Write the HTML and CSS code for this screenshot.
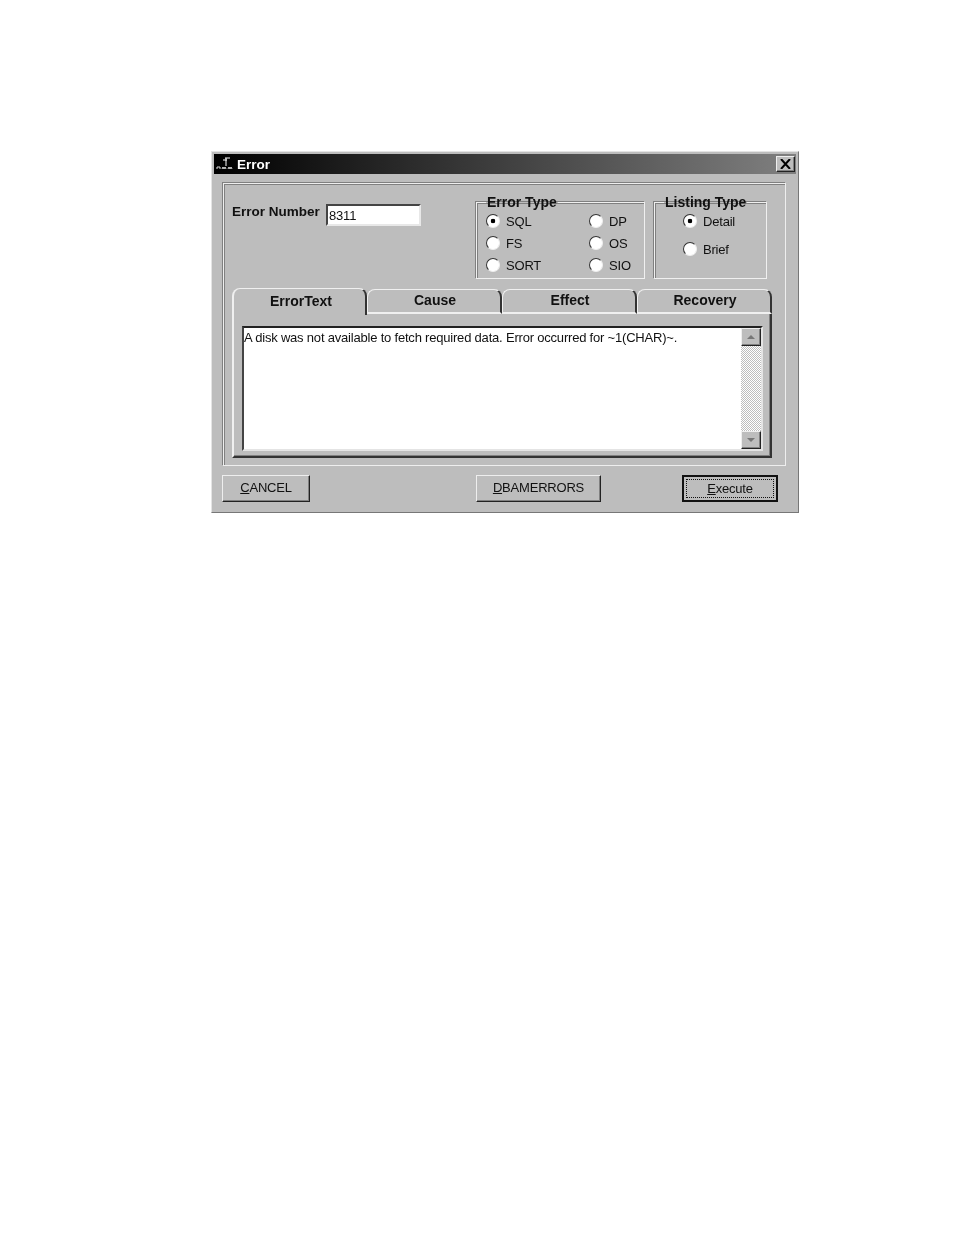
FILE: index.html
```html
<!DOCTYPE html>
<html lang="en">
<head>
  <meta charset="UTF-8">
  <meta name="viewport" content="width=device-width, initial-scale=1.0">
  <title>Error</title>
  <link rel="stylesheet" href="styles.css">
</head>
<body>
  <div class="window">
    <div class="titlebar">
      <svg class="app-icon" width="19" height="14" viewBox="0 0 19 14">
        <path d="M9 1h5M10 1v8M7 3h4" stroke="#fff" stroke-width="1" fill="none"/>
        <path d="M1 12v-2h3v2M6 12l1-2 1 2 1-2 1 2M12 12l1-2 1 2 1-2 1 2" stroke="#ddd" stroke-width="1" fill="none"/>
      </svg>
      <span class="title">Error</span>
      <button class="close" type="button">
        <svg width="11" height="10" viewBox="0 0 11 10"><path d="M1 0l9 10M10 0L1 10" stroke="#000" stroke-width="2"/></svg>
      </button>
    </div>

    <div class="panel">
      <div class="top-row">
        <div class="number-field">
          <label class="number-label" for="errorNumber">Error Number</label>
          <input id="errorNumber" class="number-input" type="text" value="8311">
        </div>

        <fieldset class="group group-error">
          <legend>Error Type</legend>
          <label class="radio"><input type="radio" name="etype" checked>SQL</label>
          <label class="radio"><input type="radio" name="etype">DP</label>
          <label class="radio"><input type="radio" name="etype">FS</label>
          <label class="radio"><input type="radio" name="etype">OS</label>
          <label class="radio"><input type="radio" name="etype">SORT</label>
          <label class="radio"><input type="radio" name="etype">SIO</label>
        </fieldset>

        <fieldset class="group group-listing">
          <legend>Listing Type</legend>
          <label class="radio"><input type="radio" name="ltype" checked>Detail</label>
          <label class="radio"><input type="radio" name="ltype">Brief</label>
        </fieldset>
      </div>

      <div class="tabs">
        <div class="tab active">ErrorText</div>
        <div class="tab">Cause</div>
        <div class="tab">Effect</div>
        <div class="tab">Recovery</div>
      </div>

      <div class="tab-body">
        <div class="text-box">
          <div class="message">A disk was not available to fetch required data. Error occurred for ~1(CHAR)~.</div>
          <div class="scrollbar">
            <div class="scroll-btn"><span class="arrow-up"></span></div>
            <div class="scroll-track"></div>
            <div class="scroll-btn"><span class="arrow-down"></span></div>
          </div>
        </div>
      </div>
    </div>

    <div class="actions">
      <button class="btn btn-cancel" type="button"><u>C</u>ANCEL</button>
      <button class="btn btn-db" type="button"><u>D</u>BAMERRORS</button>
      <button class="btn btn-exec" type="button"><span class="focus-ring"><u>E</u>xecute</span></button>
    </div>
  </div>
</body>
</html>
```

FILE: styles.css
```css
* {
  margin: 0;
  padding: 0;
  box-sizing: border-box;
}

body {
  background: #fff;
  font-family: "Liberation Sans", Arial, sans-serif;
  font-size: 13px;
  letter-spacing: -0.2px;
  color: #111;
}

.window {
  width: 588px;
  height: 362px;
  margin: 151px 0 0 211px;
  padding: 2px 2px 0;
  background: #bdbdbd;
  border-top: 1px solid #e4e4e4;
  border-left: 1px solid #e4e4e4;
  border-right: 1px solid #777;
  border-bottom: 1px solid #777;
  filter: blur(0.45px);
}

.titlebar {
  display: flex;
  align-items: center;
  height: 20px;
  padding: 0 1px 0 2px;
  background: linear-gradient(90deg, #000 0%, #808080 100%);
}

.app-icon {
  flex: none;
}

.title {
  margin-left: 2px;
  color: #fff;
  font-weight: 700;
  font-size: 13.5px;
  letter-spacing: 0;
}

.close {
  display: flex;
  align-items: center;
  justify-content: center;
  width: 19px;
  height: 16px;
  margin-left: auto;
  background: #bdbdbd;
  border: 1px solid;
  border-color: #eee #222 #222 #eee;
  box-shadow: inset -1px -1px 0 #808080;
}

.panel {
  width: 563px;
  height: 283px;
  margin: 9px 0 0 9px;
  padding: 17px 8px 0 8px;
  border: 1px solid #eee;
  box-shadow: inset 1px 1px 0 #808080, -1px -1px 0 #808080;
}

.top-row {
  display: flex;
  height: 87px;
}

.number-field {
  display: flex;
  align-items: flex-start;
  width: 244px;
  padding-top: 3px;
}

.number-label {
  width: 94px;
  font-weight: 700;
  font-size: 13.5px;
  letter-spacing: 0;
}

.number-input {
  width: 95px;
  height: 22px;
  padding-left: 1px;
  font: 13px "Liberation Sans", Arial, sans-serif;
  letter-spacing: -0.2px;
  color: #111;
  background: #fff;
  border: 2px solid;
  border-color: #444 #e8e8e8 #e8e8e8 #444;
  outline: none;
}

.group {
  height: 84px;
  margin-top: -6px;
  border: 1px solid #f0f0f0;
  box-shadow: inset 1px 1px 0 #808080, -1px -1px 0 #808080;
}

.group legend {
  padding: 0 1px;
  font-weight: 700;
  font-size: 14px;
  line-height: 14px;
  letter-spacing: 0;
  white-space: nowrap;
}

.group-error {
  display: grid;
  grid-template-columns: 103px 1fr;
  grid-auto-rows: 22px;
  align-content: start;
  width: 169px;
  margin-right: 9px;
  padding: 1px 0 0 9px;
}

.group-listing {
  display: flex;
  flex-direction: column;
  gap: 6px;
  width: 113px;
  padding: 1px 0 0 28px;
}

.group-listing legend {
  margin-left: -19px;
}

.radio {
  display: flex;
  align-items: center;
  height: 22px;
  gap: 6px;
}

.radio input {
  appearance: none;
  flex: none;
  width: 14px;
  height: 14px;
  border-radius: 50%;
  background: #fff;
  border: 1.5px solid;
  border-color: #333 #eee #eee #333;
}

.radio input:checked {
  background: radial-gradient(circle, #000 0 2px, #fff 2.6px);
}

.tabs {
  display: flex;
  height: 26px;
}

.tab {
  flex: 0 0 135px;
  height: 25px;
  margin-top: 1px;
  padding: 2px 0 0 2px;
  text-align: center;
  font-weight: 700;
  font-size: 14px;
  letter-spacing: 0;
  border: 1px solid #f0f0f0;
  border-right: 2px solid #333;
  border-bottom: 2px solid #f0f0f0;
  border-radius: 8px 8px 0 0;
}

.tab.active {
  height: 27px;
  margin-top: 0;
  padding: 4px 0 0 3px;
  border-bottom: none;
  border-left-width: 2px;
}

.tab-body {
  width: 540px;
  height: 144px;
  padding: 12px 7px 0 8px;
  border-left: 2px solid #f0f0f0;
  border-right: 2px solid #333;
  border-bottom: 2px solid #333;
  box-shadow: inset -1px -1px 0 #808080;
}

.text-box {
  display: flex;
  height: 125px;
  background: #fff;
  border-top: 2px solid #222;
  border-left: 2px solid #444;
  border-bottom: 2px solid #e4e4e4;
  border-right: 2px solid #e4e4e4;
}

.message {
  flex: 1;
  padding-top: 2px;
  line-height: 16px;
}

.scrollbar {
  display: flex;
  flex-direction: column;
  width: 20px;
}

.scroll-track {
  flex: 1;
  background: repeating-conic-gradient(#bdbdbd 0 25%, #fff 0 50%) 0 0 / 2px 2px;
}

.scroll-btn {
  display: flex;
  align-items: center;
  justify-content: center;
  height: 18px;
  background: #bdbdbd;
  border: 1px solid;
  border-color: #eee #222 #222 #eee;
  box-shadow: inset -1px -1px 0 #808080;
}

.arrow-up,
.arrow-down {
  width: 0;
  height: 0;
  border-left: 4px solid transparent;
  border-right: 4px solid transparent;
}

.arrow-up {
  border-bottom: 4px solid #777;
}

.arrow-down {
  border-top: 4px solid #777;
}

.actions {
  display: flex;
  margin: 9px 0 0 8px;
}

.btn {
  height: 27px;
  padding-bottom: 3px;
  font: 13px "Liberation Sans", Arial, sans-serif;
  letter-spacing: -0.2px;
  color: #111;
  background: #bdbdbd;
  border: 1px solid;
  border-color: #eee #222 #222 #eee;
  box-shadow: inset -1px -1px 0 #808080;
}

.btn-cancel {
  width: 88px;
}

.btn-db {
  width: 125px;
  margin-left: 166px;
}

.btn-exec {
  width: 96px;
  margin-left: 81px;
  padding: 2px;
  border: 2px solid #111;
  box-shadow: none;
}

.focus-ring {
  display: block;
  height: 100%;
  line-height: 17px;
  border: 1px dotted #111;
}
```
